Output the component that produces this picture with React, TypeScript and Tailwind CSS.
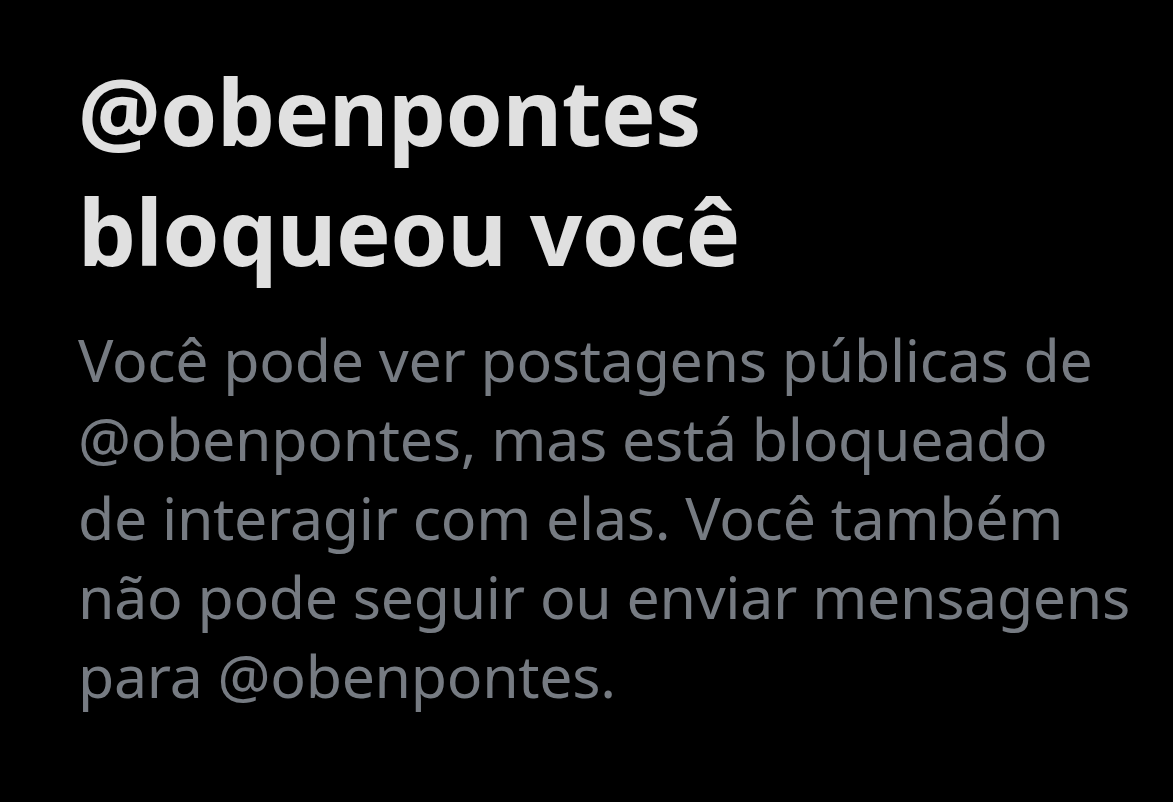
export default function App() {
  return (
    <div className="min-h-[802px] w-full bg-black pl-[78px] pt-[51px] font-['Noto_Sans',sans-serif]">
      <h1 className="text-[92px] font-bold leading-[120px] tracking-[-0.6px] text-[#e0e0e0]">
        @obenpontes
        <br />
        bloqueou você
      </h1>
      <p className="mt-[29px] whitespace-nowrap text-[59px] leading-[79px] tracking-[-0.3px] text-[#767b82]">
        Você pode ver postagens públicas de
        <br />
        @obenpontes, mas está bloqueado
        <br />
        de interagir com elas. Você também
        <br />
        não pode seguir ou enviar mensagens
        <br />
        para @obenpontes.
      </p>
    </div>
  );
}
